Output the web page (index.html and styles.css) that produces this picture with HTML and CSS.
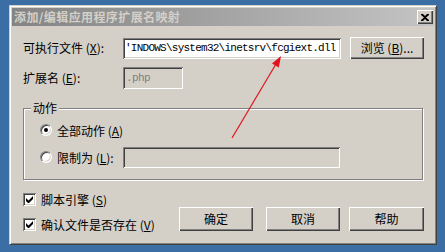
FILE: index.html
```html
<!DOCTYPE html>
<html>
<head>
<meta charset="utf-8">
<link rel="stylesheet" href="styles.css">
</head>
<body>
<div class="desk">
  <div class="dialog">
    <div class="titlebar">
      <span class="title">添加/编辑应用程序扩展名映射</span>
      <span class="close"><svg width="8" height="7" viewBox="0 0 8 7"><path d="M0 0h2l2 2 2-2h2v1L5 3.5 8 6v1H6L4 5 2 7H0V6l3-2.5L0 1z" fill="#000"/></svg></span>
    </div>
    <div class="body">
      <div class="row r1">
        <span class="lbl">可执行文件 (<u>X</u>):</span>
        <div class="field path">'INDOWS\system32\inetsrv\fcgiext.dll</div>
        <button class="btn browse">浏览 (<u>B</u>)...</button>
      </div>
      <div class="row r2">
        <span class="lbl">扩展名 (<u>E</u>):</span>
        <div class="field ext disabled">.php</div>
      </div>
      <div class="group">
        <span class="legend">动作</span>
        <div class="opt o1"><span class="radio on"></span><span>全部动作 (<u>A</u>)</span></div>
        <div class="opt o2"><span class="radio"></span><span class="optlbl">限制为 (<u>L</u>):</span><div class="field verbs disabled"></div></div>
      </div>
      <div class="bottom">
        <div class="checks">
          <div class="chk"><span class="box"><svg width="7" height="7" viewBox="0 0 7 7"><path d="M0 2v3l2 2h1l4-4V0L2.5 4.5z" fill="#000"/></svg></span><span>脚本引擎 (<u>S</u>)</span></div>
          <div class="chk c2"><span class="box"><svg width="7" height="7" viewBox="0 0 7 7"><path d="M0 2v3l2 2h1l4-4V0L2.5 4.5z" fill="#000"/></svg></span><span>确认文件是否存在 (<u>V</u>)</span></div>
        </div>
        <div class="buttons">
          <button class="btn b-ok">确定</button>
          <button class="btn b-cancel">取消</button>
          <button class="btn b-help">帮助</button>
        </div>
      </div>
    </div>
  </div>
  <svg class="arrow" width="445" height="252" viewBox="0 0 445 252">
    <line x1="232" y1="138" x2="276" y2="64" stroke="#e4101c" stroke-width="1.2"/>
    <polygon points="281,56 278.8,67.5 272,63.4" fill="#e4101c"/>
  </svg>
</div>
</body>
</html>
```
FILE: styles.css
```css
body {
  margin: 0;
  background: #3a6ea5;
  font-family: "Noto Sans CJK SC", "Liberation Sans", sans-serif;
  font-size: 12px;
  color: #000;
}
.desk {
  position: relative;
  width: 445px;
  height: 252px;
  box-sizing: border-box;
  padding: 5px 0 0 9px;
  overflow: hidden;
}
.dialog {
  width: 428px;
  height: 240px;
  box-sizing: border-box;
  background: #d4d0c8;
  border: 1px solid;
  border-color: #d4d0c8 #404040 #404040 #d4d0c8;
  box-shadow: inset 1px 1px #fff, inset -1px -1px #808080;
  padding: 2px;
  display: flex;
  flex-direction: column;
}
.titlebar {
  height: 18px;
  flex: none;
  background: linear-gradient(to right, #848484, #c4c4c4);
  display: flex;
  align-items: center;
  padding: 0 1px 0 2px;
}
.title {
  color: #d4d0c8;
  font-weight: bold;
  font-size: 12px;
  letter-spacing: 0.4px;
  line-height: 14px;
}
.close {
  margin-left: auto;
  width: 16px;
  height: 14px;
  background: #d4d0c8;
  box-shadow: inset 1px 1px #fff, inset -1px -1px #404040, inset -2px -2px #808080;
  display: flex;
  align-items: center;
  justify-content: center;
}
.body {
  flex: 1;
  padding: 11px 10px 0 11px;
}
.row {
  display: flex;
  align-items: center;
  height: 22px;
}
.lbl {
  width: 100px;
  flex: none;
  line-height: 14px;
}
.field {
  box-sizing: border-box;
  height: 21px;
  background: #fff;
  box-shadow: inset 1px 1px #808080, inset -1px -1px #fff, inset 2px 2px #404040, inset -2px -2px #d4d0c8;
  padding: 0 3px;
  font-family: "Liberation Mono", monospace;
  font-size: 11px;
  letter-spacing: -0.6px;
  line-height: 21px;
  white-space: nowrap;
  overflow: hidden;
}
.disabled {
  background: #d4d0c8;
  color: #808080;
}
.path {
  width: 218px;
  align-self: flex-end;
  padding: 0 2px;
  letter-spacing: -0.75px;
}
.btn {
  box-sizing: border-box;
  border: none;
  padding: 0;
  background: #d4d0c8;
  box-shadow: inset 1px 1px #fff, inset -1px -1px #404040, inset -2px -2px #808080;
  font-family: "Noto Sans CJK SC", "Liberation Sans", sans-serif;
  font-size: 12px;
  color: #000;
  line-height: 14px;
}
.browse {
  width: 74px;
  height: 22px;
  margin-left: 9px;
}
.r2 {
  margin-top: 8px;
}
.ext {
  width: 60px;
  height: 22px;
  line-height: 22px;
}
.group {
  margin-top: 19px;
  width: 400px;
  height: 72px;
  box-sizing: border-box;
  border: 1px solid #808080;
  box-shadow: inset 1px 1px #fff, 1px 1px #fff;
  padding-left: 16px;
  display: flex;
  flex-direction: column;
}
.legend {
  align-self: flex-start;
  margin: -8px 0 0 -9px;
  padding: 0 2px;
  background: #d4d0c8;
  line-height: 14px;
}
.opt {
  display: flex;
  align-items: center;
}
.o1 {
  margin-top: 7px;
  height: 16px;
}
.o2 {
  margin-top: 8px;
  height: 22px;
}
.radio {
  width: 12px;
  height: 12px;
  box-sizing: border-box;
  border-radius: 50%;
  background: #fff;
  border: 1px solid;
  border-color: #808080 #fff #fff #808080;
  box-shadow: inset 1px 1px #404040, inset -1px -1px #d4d0c8;
  margin-right: 5px;
  flex: none;
  display: flex;
  align-items: center;
  justify-content: center;
}
.radio.on::after {
  content: "";
  width: 4px;
  height: 4px;
  border-radius: 50%;
  background: #000;
}
.optlbl {
  width: 66px;
}
.verbs {
  width: 217px;
}
.bottom {
  display: flex;
}
.checks {
  padding-top: 13px;
}
.chk {
  display: flex;
  align-items: center;
  height: 13px;
  line-height: 14px;
}
.c2 {
  margin-top: 12px;
}
.box {
  width: 13px;
  height: 13px;
  box-sizing: border-box;
  background: #fff;
  box-shadow: inset 1px 1px #808080, inset -1px -1px #fff, inset 2px 2px #404040, inset -2px -2px #d4d0c8;
  margin-right: 5px;
  display: flex;
  align-items: center;
  justify-content: center;
  flex: none;
}
.buttons {
  margin-left: auto;
  align-self: flex-end;
  display: flex;
}
.buttons .btn {
  height: 24px;
}
.b-ok {
  width: 74px;
  margin-right: 13px;
}
.b-cancel {
  width: 74px;
  margin-right: 9px;
}
.b-help {
  width: 75px;
}
.arrow {
  position: absolute;
  left: 0;
  top: 0;
  pointer-events: none;
}
```
